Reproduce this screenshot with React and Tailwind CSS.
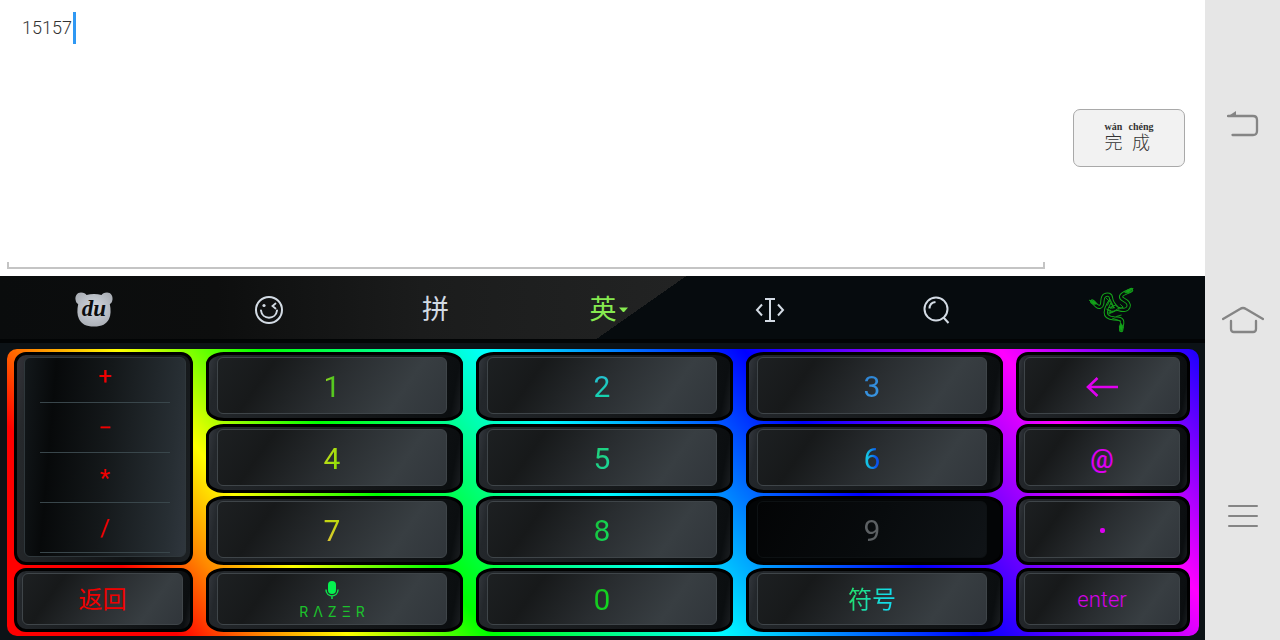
import React from "react";

const CJK = "font-['Roboto','Noto_Sans_CJK_SC',sans-serif]";

function Key({ children, dim = false, narrow = false, label }) {
  return (
    <button
      type="button"
      aria-label={label}
      className={
        "flex h-full w-full border-[3px] border-black pt-[2px] pb-[4px] " +
        (narrow ? "rounded-[12px] pr-[7px] pl-[5px] " : "rounded-[18px/12px] pr-[13px] pl-[8px] ") +
        (dim
          ? "bg-[#030506]"
          : "bg-[linear-gradient(100deg,#34383e_0%,#23272b_4%,#15181a_60%,#0b0e10_96%,#1b1e21_100%)]")
      }
    >
      <span
        className={
          "flex h-full w-full items-center justify-center rounded-[6px] border pt-[2px] " +
          (dim
            ? "border-[#0d1113] bg-[linear-gradient(120deg,#030405,#080b0d_50%,#101417)]"
            : "border-[#3f4549] bg-[linear-gradient(125deg,#1d2022_0%,#17191a_22%,#292d30_50%,#383e42_78%,#30353a_100%)]")
        }
      >
        {children}
      </span>
    </button>
  );
}

function Digit({ children, tone }) {
  return (
    <span className={"bg-clip-text font-['Roboto',sans-serif] text-[30px] leading-9 text-transparent " + tone}>
      {children}
    </span>
  );
}

function Tool({ label, wide = false, children }) {
  return (
    <button
      type="button"
      aria-label={label}
      className={"flex items-center justify-center text-[#d3dbe4] " + (wide ? "flex-[183]" : "flex-[167]")}
    >
      {children}
    </button>
  );
}

function BearLogo() {
  return (
    <svg width="38" height="35" viewBox="0 0 38 35" aria-hidden="true">
      <defs>
        <radialGradient id="bear" cx="50%" cy="45%" r="60%">
          <stop offset="0" stopColor="#d3d9e1" />
          <stop offset="1" stopColor="#a9adb4" />
        </radialGradient>
      </defs>
      <path
        d="M6 .5C9 .5 10.500 1.500 11.500 3C16 1.500 22 1.500 26.500 3C27.500 1.500 29 .5 32 .5C36 .5 38 4 37.500 7.500C37 10.500 36 11.500 34.800 12C36 18 36 23 34 27C31.500 32 27 34.500 19 34.500C11 34.500 6.500 32 4 27C2 23 2 18 3.200 12C2 11.500 1 10.500.5 7.500C0 4 2 .5 6 .5Z"
        fill="url(#bear)"
      />
      <text
        x="19"
        y="24"
        textAnchor="middle"
        fontFamily="Liberation Serif, serif"
        fontWeight="700"
        fontStyle="italic"
        fontSize="23"
        fill="#0b0d0e"
      >
        du
      </text>
    </svg>
  );
}

function SnakeLogo() {
  const paths = [
    "M10 47C16 51 18 55 24 60C31 66 38 63 40 54C42 44 39 33 48 28C57 23 66 26 67 36C68 46 76 58 84 66",
    "M128 12C122 16 112 19 105 23C95 29 95 36 105 41C115 46 124 52 120 63C117 73 104 74 92 70C80 67 72 74 62 70",
    "M62 50C58 58 51 66 51 80C51 93 62 97 76 98C90 98 102 99 101 112C100 120 98 126 98 134",
  ];
  return (
    <svg width="46" height="48" viewBox="0 0 140 145" fill="none" strokeLinecap="round" strokeLinejoin="round" aria-hidden="true">
      <g stroke="#14a51b" strokeWidth="13">
        {paths.map((d) => (
          <path key={d} d={d} />
        ))}
      </g>
      <g stroke="#060b0c" strokeWidth="7">
        {paths.map((d) => (
          <path key={d} d={d} />
        ))}
      </g>
      <g stroke="#129a19" strokeWidth="3">
        <path d="M2 43L18 47L24 54L14 55ZM133 7L116 12L109 20L121 20ZM98 138L92 124L98 114L104 124Z" fill="#14a51b" />
        <path d="M52 36L62 46L56 58M64 40L74 60L66 68M60 66L80 58L92 66L74 78L58 82M96 56L104 64L90 70M62 84L78 76M72 98L96 106M54 70L66 74M84 92L98 88" />
      </g>
    </svg>
  );
}

const operators = ["+", "−", "*", "/"];

export default function App() {
  return (
    <div className={"flex min-h-screen w-full bg-white " + CJK}>
      <main className="flex min-w-0 flex-1 flex-col">
        <section className="flex flex-1 items-stretch pl-[7px] pr-5">
          <div className="relative flex flex-1 flex-col justify-between">
            <textarea
              aria-label="输入"
              defaultValue="15157"
              className="min-h-0 w-full flex-1 resize-none bg-transparent pl-[15px] pt-3 font-['Roboto',sans-serif] text-[18px] font-light leading-8 text-[#333] outline-none"
            />
            <span className="absolute left-[66px] top-3 h-8 w-[3px] bg-[#2f98f3]" />
            <div className="mb-[7px] h-[7px] border-x-2 border-b-2 border-[#c4c4c4]" />
          </div>
          <div className="ml-7 flex items-center">
            <button
              type="button"
              className="flex h-[58px] w-28 items-center justify-center gap-[6px] rounded-[7px] border border-[#a9a9a9] bg-[#f2f2f2] pb-1 text-[#333]"
            >
              {[
                ["wán", "完"],
                ["chéng", "成"],
              ].map(([pinyin, hanzi]) => (
                <span key={hanzi} className="flex flex-col items-center">
                  <span className="font-['Liberation_Serif',serif] text-[10px] font-bold leading-[10px]">{pinyin}</span>
                  <span className="font-['Noto_Sans_CJK_SC',sans-serif] text-[18px] font-light leading-[18px]">{hanzi}</span>
                </span>
              ))}
            </button>
          </div>
        </section>

        <section className="flex flex-col bg-[#0c1216] pb-1">
          <div className="mb-[6px] flex h-[67px] border-b-4 border-[#020405] bg-[linear-gradient(145deg,transparent_53%,#060b0e_53%),linear-gradient(90deg,#0a0c0d_0%,#0d0e0e_18%,#1b1c1c_35%,#222323_56%)] px-[2px] pt-1">
            <Tool label="du" wide>
              <BearLogo />
            </Tool>
            <Tool label="表情">
              <svg width="30" height="30" viewBox="0 0 30 30" fill="none" stroke="currentColor" strokeWidth="2" strokeLinecap="round" aria-hidden="true">
                <circle cx="15" cy="15" r="13" />
                <path d="M7 15.500C8 25 22 25 23 15.500" />
                <path d="M21.500 8.500L18.500 11L21.500 13.500" strokeWidth="1.800" />
                <circle cx="10" cy="10.500" r="1.600" fill="currentColor" stroke="none" />
              </svg>
            </Tool>
            <Tool label="拼音">
              <span className="text-[27px] leading-8">拼</span>
            </Tool>
            <Tool label="英文">
              <span className="flex items-center gap-[2px] pl-3 text-[#86ea50]">
                <span className="text-[27px] leading-8">英</span>
                <svg width="9" height="6" viewBox="0 0 9 6" fill="currentColor" aria-hidden="true">
                  <path d="M0 .5H9L5.300 4.700Q4.500 5.500 3.700 4.700Z" />
                </svg>
              </span>
            </Tool>
            <Tool label="光标">
              <svg width="30" height="26" viewBox="0 0 30 26" fill="none" stroke="currentColor" strokeWidth="2" aria-hidden="true">
                <path d="M10 2H20M10 24H20M15 2V24M7 7.500L2 13L7 18.500M23 7.500L28 13L23 18.500" />
              </svg>
            </Tool>
            <Tool label="搜索">
              <svg width="28" height="28" viewBox="0 0 28 28" fill="none" stroke="currentColor" strokeWidth="2" aria-hidden="true">
                <circle cx="13" cy="13" r="11.500" />
                <path d="M20.500 21.500L25.500 27M6.500 12.500C6.500 9 9 6.500 12.500 6" />
              </svg>
            </Tool>
            <Tool label="Razer" wide>
              <SnakeLogo />
            </Tool>
          </div>

          <div className="ml-[7px] mr-[6px] grid grid-cols-[179fr_257fr_257fr_257fr_174fr] grid-rows-[69px_69px_69px_64px] gap-x-[13px] gap-y-[3px] rounded-[10px] bg-[linear-gradient(51deg,#ff0000_0%,#ff0000_12%,#ff8800_18%,#ffff00_24%,#00ff00_34%,#00ffff_50%,#0000ff_68%,#ff00ff_86%,#1a00ff_100%)] pb-1 pl-[7px] pr-[9px] pt-[3px]">
            <div className="row-span-3 flex rounded-[12px] border-[3px] border-black bg-[linear-gradient(100deg,#34333a_0%,#26292c_8%,#101315_70%,#1d2124_100%)] pb-[5px] pl-[7px] pr-1 pt-[2px]">
              <div className="flex flex-1 flex-col rounded-[6px] border border-[#2f373b] bg-[linear-gradient(95deg,#13181b_0%,#07090a_18%,#14181a_50%,#272e33_88%,#2f363d_100%)] px-[15px]">
                {operators.map((op, i) => (
                  <button
                    key={op}
                    type="button"
                    className={
                      "flex w-full items-center justify-center border-b border-[#39464b] text-2xl leading-6 text-[#f00000] " +
                      (i === 0 ? "h-[45px] pb-2" : "h-[50px]")
                    }
                  >
                    {op}
                  </button>
                ))}
              </div>
            </div>
            <Key><Digit tone="bg-[linear-gradient(90deg,#9bd820,#1fbb20)]">1</Digit></Key>
            <Key><Digit tone="bg-[linear-gradient(160deg,#2bb8e0,#0edc9c)]">2</Digit></Key>
            <Key><Digit tone="bg-[linear-gradient(160deg,#2a80d0,#3d9be6)]">3</Digit></Key>
            <Key narrow label="删除">
              <svg width="32" height="20" viewBox="0 0 32 20" fill="none" stroke="#e000f0" strokeWidth="2.600" aria-hidden="true">
                <path d="M32 10H2M11.500 1L2 10L11.500 19" />
              </svg>
            </Key>
            <Key><Digit tone="bg-[linear-gradient(110deg,#d4dc20,#7ce000)]">4</Digit></Key>
            <Key><Digit tone="bg-[linear-gradient(120deg,#22cf70,#18d6a0)]">5</Digit></Key>
            <Key><Digit tone="bg-[linear-gradient(90deg,#14c4e4_20%,#0a50f0_80%)]">6</Digit></Key>
            <Key narrow><span className="text-[26px] font-medium leading-8 text-[#dc00f0]">@</span></Key>
            <Key><Digit tone="bg-[linear-gradient(200deg,#b6e000,#e6c040)]">7</Digit></Key>
            <Key><Digit tone="bg-[linear-gradient(100deg,#18c038,#14dc60)]">8</Digit></Key>
            <Key dim><Digit tone="bg-[#5c6063]">9</Digit></Key>
            <Key narrow label="."><span className="size-[5px] rounded-[2px] bg-[#dc00f0]" /></Key>
            <Key narrow>
              <span className="text-2xl leading-8 text-[#f00000]">返回</span>
            </Key>
            <Key label="RAZER">
              <span className="flex flex-col items-center gap-[5px] text-[#14d93e]">
                <svg width="14" height="18" viewBox="0 0 14 18" fill="none" stroke="#10e04c" aria-hidden="true">
                  <rect x="3" y="0" width="8" height="13" rx="4" fill="#05f24f" stroke="none" />
                  <path d="M1 8.500C1 17 13 17 13 8.500M7 15V18" strokeWidth="1.500" />
                </svg>
                <span className="flex gap-[5px] font-['Inter',sans-serif] text-sm leading-4 text-[#1cc22c]">
                  <span>R</span>
                  <span>Λ</span>
                  <span>Z</span>
                  <span>Ξ</span>
                  <span>R</span>
                </span>
              </span>
            </Key>
            <Key><Digit tone="bg-[linear-gradient(110deg,#18c020,#10e020)]">0</Digit></Key>
            <Key>
              <span className="bg-[linear-gradient(110deg,#20e078_20%,#14dce8_70%)] bg-clip-text text-2xl leading-8 text-transparent">
                符号
              </span>
            </Key>
            <Key narrow>
              <span className="font-['Roboto',sans-serif] text-[22px] font-light leading-6 text-[#d400e8]">enter</span>
            </Key>
          </div>
        </section>
      </main>

      <nav aria-label="系统导航" className="flex w-[75px] flex-col bg-[#e6e6e6] py-[26px] text-[#858585]">
        <button type="button" aria-label="返回" className="flex flex-1 items-center justify-center">
          <svg width="32" height="26" viewBox="0 0 32 26" fill="none" aria-hidden="true">
            <path d="M1 5H26Q30 5 30 9V20Q30 24 26 24H5.500" stroke="currentColor" strokeWidth="2.300" strokeLinecap="round" />
            <path d="M0 6L9 0V6Z" fill="currentColor" />
          </svg>
        </button>
        <button type="button" aria-label="主页" className="flex flex-1 items-center justify-center">
          <svg width="42" height="28" viewBox="0 0 42 28" fill="none" stroke="currentColor" strokeWidth="2.300" strokeLinecap="round" aria-hidden="true">
            <path d="M1 13L18 3Q21 1 24 3L41 13M9 15V23Q9 26 12 26H31Q34 26 34 23V15" />
          </svg>
        </button>
        <button type="button" aria-label="菜单" className="flex flex-1 items-center justify-center">
          <svg width="30" height="24" viewBox="0 0 30 24" fill="none" stroke="currentColor" strokeWidth="2" strokeLinecap="round" aria-hidden="true">
            <path d="M1 2H29M1 12H29M1 22H29" />
          </svg>
        </button>
      </nav>
    </div>
  );
}
